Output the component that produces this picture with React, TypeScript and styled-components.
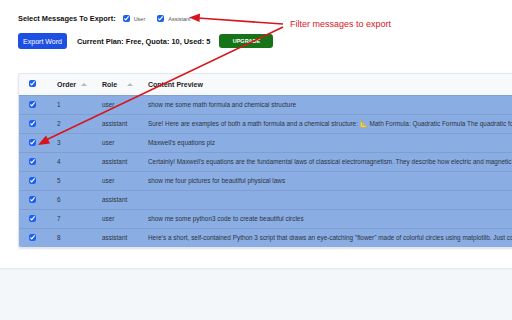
import React from "react";
import styled, { createGlobalStyle } from "styled-components";

const ROWS = [
  { order: 1, role: "user", text: "show me some math formula and chemical structure" },
  {
    order: 2,
    role: "assistant",
    text: "Sure! Here are examples of both a math formula and a chemical structure: \u{1F4D0} Math Formula: Quadratic Formula The quadratic formula is used to solve",
  },
  { order: 3, role: "user", text: "Maxwell's equations plz" },
  {
    order: 4,
    role: "assistant",
    text: "Certainly! Maxwell's equations are the fundamental laws of classical electromagnetism. They describe how electric and magnetic fields are generated",
  },
  { order: 5, role: "user", text: "show me four pictures for beautiful physical laws" },
  { order: 6, role: "assistant", text: "" },
  { order: 7, role: "user", text: "show me some python3 code to create beautiful circles" },
  {
    order: 8,
    role: "assistant",
    text: "Here's a short, self-contained Python 3 script that draws an eye-catching \"flower\" made of colorful circles using matplotlib. Just copy and run",
  },
];

const GlobalStyle = createGlobalStyle`
  html, body {
    margin: 0;
    padding: 0;
    background: #f4f7fa;
    overflow: hidden;
  }
  body {
    font-family: "Liberation Sans", Arial, sans-serif;
    color: #222;
  }
`;

function App() {
  return (
    <>
      <GlobalStyle />
      <Page>
        <Top>
          <FilterRow>
            <FilterLabel>Select Messages To Export:</FilterLabel>
            <Check>
              <Box type="checkbox" defaultChecked />
              <span>User</span>
            </Check>
            <Check>
              <Box type="checkbox" defaultChecked />
              <span>Assistant</span>
            </Check>
          </FilterRow>
          <ActionRow>
            <Button $tone="blue">Export Word</Button>
            <Plan>Current Plan: Free, Quota: 10, Used: 5</Plan>
            <Button $tone="green" $bold>
              UPGRADE
            </Button>
          </ActionRow>

          <Card>
            <Table>
              <thead>
                <tr>
                  <Th $w={28}>
                    <Box type="checkbox" defaultChecked />
                  </Th>
                  <Th $w={45}>
                    <HeadCell>
                      Order <Sort />
                    </HeadCell>
                  </Th>
                  <Th $w={46}>
                    <HeadCell>
                      Role <Sort />
                    </HeadCell>
                  </Th>
                  <Th>Content Preview</Th>
                </tr>
              </thead>
              <tbody>
                {ROWS.map((r) => (
                  <Tr key={r.order}>
                    <Td>
                      <Box type="checkbox" defaultChecked />
                    </Td>
                    <Td>{r.order}</Td>
                    <Td>{r.role}</Td>
                    <Td>{r.text}</Td>
                  </Tr>
                ))}
              </tbody>
            </Table>
          </Card>

          <Note>Filter messages to export</Note>
          <Arrows width="512" height="160" viewBox="0 0 512 160">
            <line x1="283" y1="24" x2="198" y2="18" stroke="#d8151c" strokeWidth="1.6" />
            <polygon points="189,17.5 200,13.5 199.5,22" fill="#d8151c" />
            <line x1="283" y1="27" x2="46" y2="140" stroke="#d8151c" strokeWidth="1.6" />
            <polygon points="38,145 46,135.5 50,143.5" fill="#d8151c" />
          </Arrows>
        </Top>
      </Page>
    </>
  );
}

const Page = styled.div`
  width: 512px;
  height: 320px;
  overflow: hidden;
`;

const Top = styled.div`
  position: relative;
  background: #fff;
  height: 268px;
  padding: 12px 0 0 18px;
  box-sizing: border-box;
  box-shadow: 0 1px 2px rgba(0, 0, 0, 0.08);
`;

const FilterRow = styled.div`
  display: flex;
  align-items: center;
  height: 13px;
  gap: 6px;
`;

const FilterLabel = styled.span`
  font-size: 7.4px;
  font-weight: bold;
  color: #111;
  margin-right: 1px;
`;

const Check = styled.label`
  display: flex;
  align-items: center;
  gap: 4px;
  font-size: 5.5px;
  color: #555;
  margin-right: 6px;
`;

const Box = styled.input`
  width: 7px;
  height: 7px;
  margin: 0;
  accent-color: #1a5ff0;
`;

const ActionRow = styled.div`
  display: flex;
  align-items: center;
  margin-top: 8px;
  height: 16px;
`;

const Button = styled.button<{ $tone: "blue" | "green"; $bold?: boolean }>`
  font-family: inherit;
  border: none;
  border-radius: 3px;
  color: #fff;
  font-size: ${(p) => (p.$bold ? "5.5px" : "7px")};
  font-weight: ${(p) => (p.$bold ? "bold" : "normal")};
  background: ${(p) => (p.$tone === "blue" ? "#1e4fe3" : "#177317")};
  height: ${(p) => (p.$tone === "blue" ? "16px" : "14px")};
  width: ${(p) => (p.$tone === "blue" ? "49px" : "54px")};
  padding: 0;
`;

const Plan = styled.span`
  font-size: 7.4px;
  font-weight: bold;
  color: #111;
  margin: 0 9px 0 10px;
`;

const Card = styled.div`
  margin-top: 24px;
  width: 520px;
  border-radius: 3px;
  border: 1px solid #e3e6ea;
  border-right: none;
  box-shadow: 0 1px 2px rgba(0, 0, 0, 0.12);
  overflow: hidden;
  background: #f8f9fa;
`;

const Table = styled.table`
  border-collapse: collapse;
  table-layout: fixed;
  width: 100%;
  white-space: nowrap;
`;

const Th = styled.th<{ $w?: number }>`
  width: ${(p) => (p.$w ? `${p.$w}px` : "auto")};
  height: 21px;
  padding: 0 0 0 10px;
  text-align: left;
  font-size: 7px;
  font-weight: bold;
  color: #222;
  box-sizing: border-box;
  vertical-align: middle;
`;

const HeadCell = styled.span`
  display: flex;
  align-items: center;
  justify-content: space-between;
  padding-right: 5px;
`;

const Sort = styled.span`
  width: 0;
  height: 0;
  border-left: 3px solid transparent;
  border-right: 3px solid transparent;
  border-bottom: 3.5px solid #b5b8bc;
`;

const Tr = styled.tr`
  background: #8aaee4;
  border-top: 1px solid #7f9fd2;
`;

const Td = styled.td`
  height: 19px;
  padding: 0 0 0 10px;
  font-size: 6.4px;
  color: #2c3440;
  overflow: hidden;
  box-sizing: border-box;
  vertical-align: middle;
`;

const Note = styled.div`
  position: absolute;
  left: 290px;
  top: 19px;
  font-size: 9px;
  color: #d8151c;
`;

const Arrows = styled.svg`
  position: absolute;
  left: 0;
  top: 0;
  pointer-events: none;
`;

export default App;
